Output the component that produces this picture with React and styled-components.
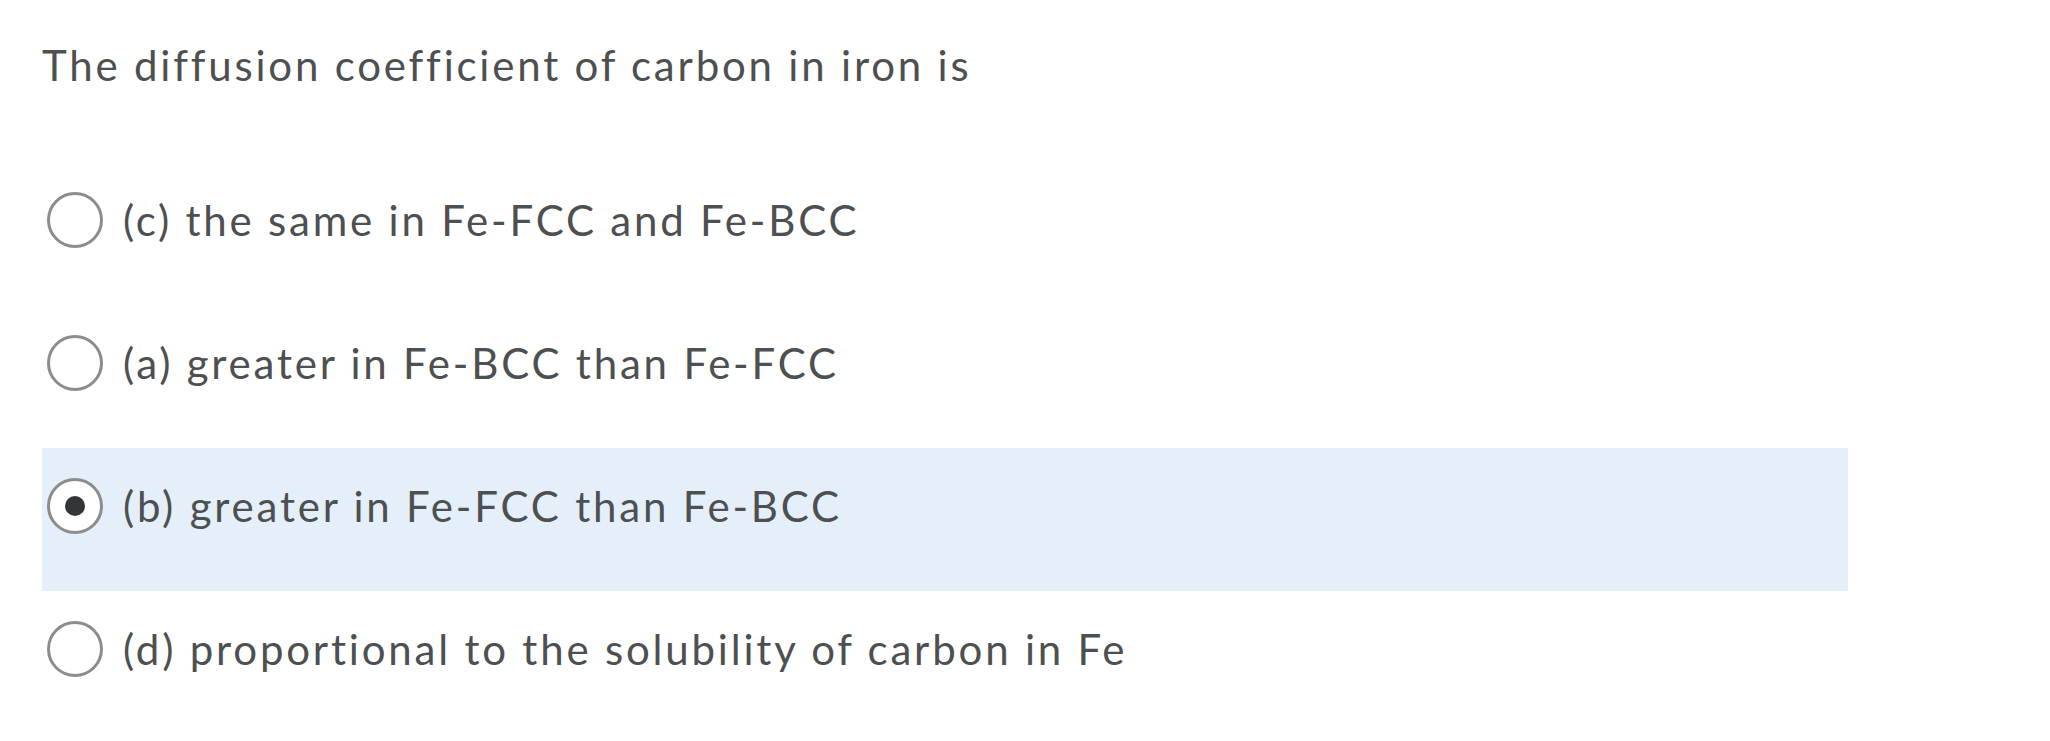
import React from 'react';
import styled, { createGlobalStyle } from 'styled-components';

const GlobalStyle = createGlobalStyle`
  body {
    margin: 0;
    background: #ffffff;
    font-family: 'Lato', 'Open Sans', sans-serif;
  }
`;

const Page = styled.div`
  padding: 40px 0 0 42px;
  width: 1806px;
`;

const Question = styled.div`
  font-size: 42px;
  line-height: 50px;
  letter-spacing: 2.8px;
  color: #4d4f51;
  margin-bottom: 72px;
`;

const OptionList = styled.div`
  display: flex;
  flex-direction: column;
`;

const OptionRow = styled.label`
  display: flex;
  align-items: center;
  gap: 20px;
  height: 143px;
  box-sizing: border-box;
  padding: 30px 0 57px 5px;
  background: ${(p) => (p.selected ? '#e4effa' : 'transparent')};
`;

const Radio = styled.span`
  display: flex;
  align-items: center;
  justify-content: center;
  flex: none;
  width: 56px;
  height: 56px;
  box-sizing: border-box;
  border-radius: 50%;
  border: 3px solid #8c8c8c;
  background: #ffffff;
`;

const Dot = styled.span`
  width: 20px;
  height: 20px;
  border-radius: 50%;
  background: #333639;
`;

const OptionText = styled.span`
  font-size: 42px;
  line-height: 50px;
  letter-spacing: 2.8px;
  color: #4d4f51;
`;

const options = [
  { id: 'c', text: '(c) the same in Fe-FCC and Fe-BCC' },
  { id: 'a', text: '(a) greater in Fe-BCC than Fe-FCC' },
  { id: 'b', text: '(b) greater in Fe-FCC than Fe-BCC', selected: true },
  { id: 'd', text: '(d) proportional to the solubility of carbon in Fe' },
];

const App = () => {
  return (
    <>
      <GlobalStyle />
      <Page>
        <Question>The diffusion coefficient of carbon in iron is</Question>
        <OptionList>
          {options.map((o) => (
            <OptionRow key={o.id} selected={o.selected}>
              <Radio>{o.selected && <Dot />}</Radio>
              <OptionText>{o.text}</OptionText>
            </OptionRow>
          ))}
        </OptionList>
      </Page>
    </>
  );
};

export default App;
